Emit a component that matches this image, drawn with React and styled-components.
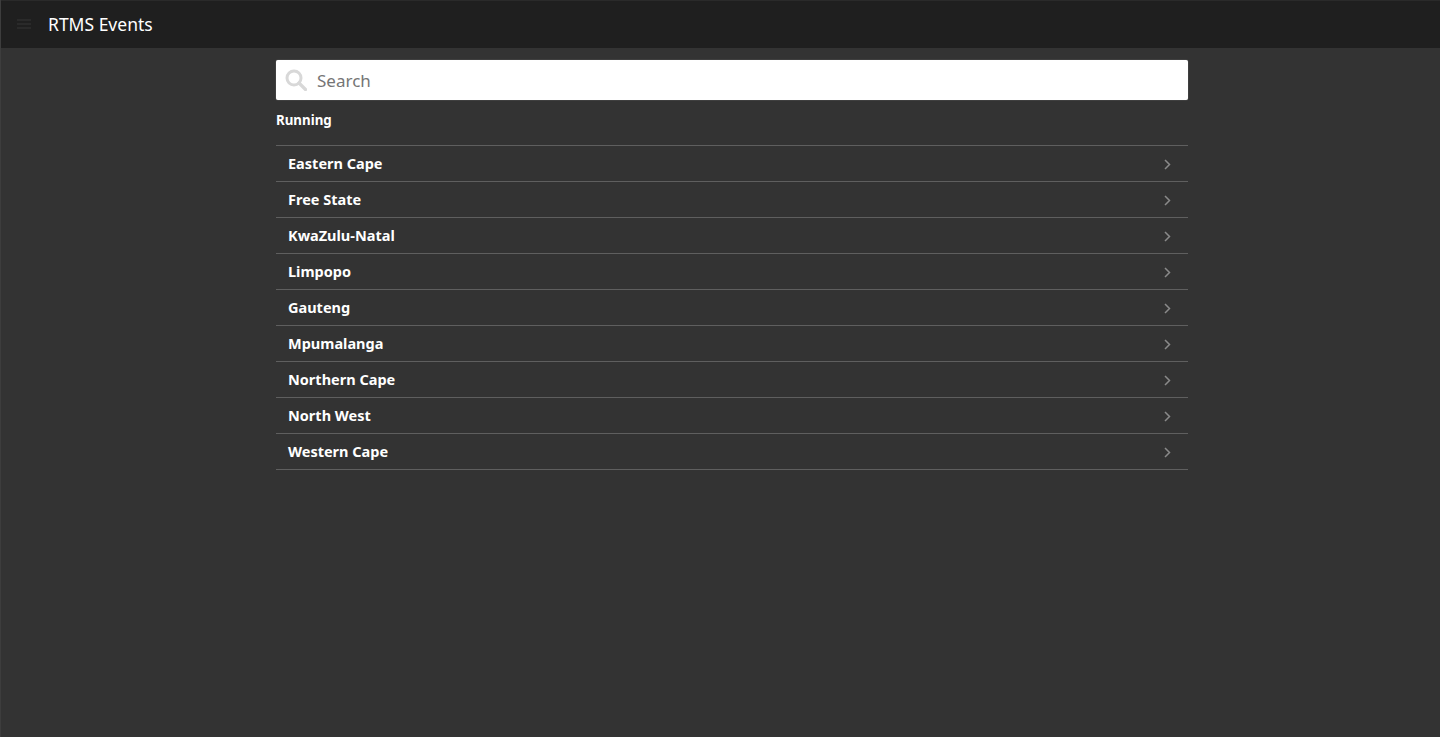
import React from "react";
import styled, { createGlobalStyle } from "styled-components";

const provinces = [
    "Eastern Cape",
    "Free State",
    "KwaZulu-Natal",
    "Limpopo",
    "Gauteng",
    "Mpumalanga",
    "Northern Cape",
    "North West",
    "Western Cape",
];

const GlobalStyle = createGlobalStyle`
    html, body {
        margin: 0;
        height: 100%;
        background: #333333;
        font-family: "Noto Sans", "Open Sans", sans-serif;
    }
    * {
        box-sizing: border-box;
    }
`;

const Page = styled.div`
    height: 737px;
    overflow: hidden;
    background: #333333;
    border-left: 1px solid #3d3d3d;
`;

const Toolbar = styled.header`
    display: flex;
    align-items: center;
    height: 48px;
    padding: 0 0 2px 16px;
    background: #1f1f1f;
    border-top: 1px solid #2a2a2a;
`;

const MenuIcon = styled.svg`
    width: 14px;
    height: 10px;
    margin-right: 17px;
`;

const Title = styled.h1`
    margin: 0;
    color: #ffffff;
    font-size: 17.5px;
    font-weight: 400;
    line-height: 46px;
`;

const Content = styled.main`
    width: 912px;
    margin-left: 275px;
    padding-top: 12px;
`;

const SearchBar = styled.div`
    display: flex;
    align-items: center;
    height: 40px;
    padding-left: 9px;
    background: #ffffff;
    border-radius: 2px;
    box-shadow: 0 0 1px #aaaaaa;
`;

const SearchIcon = styled.svg`
    width: 22px;
    height: 22px;
    margin-right: 10px;
`;

const SearchInput = styled.input`
    flex: 1;
    margin-left: -2px;
    border: none;
    outline: none;
    background: transparent;
    color: #333333;
    font-family: inherit;
    font-size: 17px;

    &::placeholder {
        color: #757575;
        opacity: 1;
    }
`;

const SectionLabel = styled.div`
    margin-top: 11px;
    color: #ffffff;
    font-size: 13.3px;
    font-weight: 700;
    line-height: 18px;
`;

const List = styled.ul`
    margin: 16px 0 0;
    padding: 0;
    list-style: none;
    border-top: 1px solid #5f5f5f;
`;

const Row = styled.li`
    display: flex;
    align-items: center;
    justify-content: space-between;
    height: 36px;
    padding: 0 17px 2px 12px;
    border-bottom: 1px solid #5f5f5f;
    color: #ffffff;
    font-size: 14.5px;
    font-weight: 700;
`;

const Chevron = styled.svg`
    width: 7px;
    height: 11px;
    margin-top: 4px;
`;

const App = () => {
    return (
        <Page>
            <GlobalStyle />
            <Toolbar>
                <MenuIcon viewBox="0 0 14 10">
                    <path d="M0 1h14M0 5h14M0 9h14" stroke="#363636" strokeWidth="1.2" />
                </MenuIcon>
                <Title>RTMS Events</Title>
            </Toolbar>
            <Content>
                <SearchBar>
                    <SearchIcon viewBox="0 0 22 22">
                        <circle cx="9" cy="9" r="7" fill="none" stroke="#d8d8d8" strokeWidth="3" />
                        <path d="M14 14l6.5 6.5" stroke="#d8d8d8" strokeWidth="3.2" strokeLinecap="round" />
                    </SearchIcon>
                    <SearchInput placeholder="Search" />
                </SearchBar>
                <SectionLabel>Running</SectionLabel>
                <List>
                    {provinces.map((name) => (
                        <Row key={name}>
                            {name}
                            <Chevron viewBox="0 0 7 11">
                                <path d="M1 1l4.5 4.5L1 10" fill="none" stroke="#8a8a8a" strokeWidth="1.5" />
                            </Chevron>
                        </Row>
                    ))}
                </List>
            </Content>
        </Page>
    );
};

export default App;
